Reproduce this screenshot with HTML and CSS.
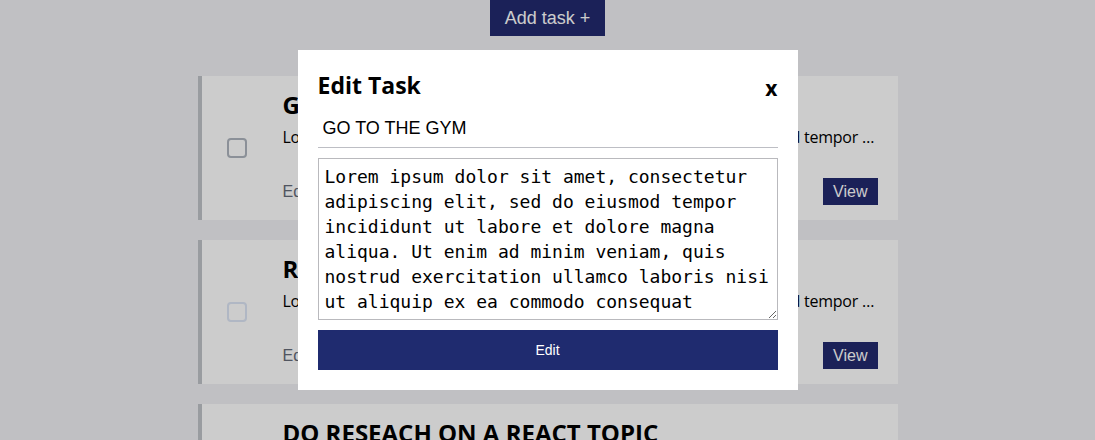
FILE: index.html
```html
<!DOCTYPE html>
<html lang="en">
<head>
    <meta charset="UTF-8">
    <meta name="viewport" content="width=device-width, initial-scale=1.0">
    <title>Tasks</title>
    <link rel="stylesheet" href="styles.css">
</head>
<body>
    <div class="top">
        <button class="add-btn">Add task +</button>
    </div>

    <div class="task-list">
        <div class="task">
            <div class="task-check">
                <input type="checkbox" class="check">
            </div>
            <div class="task-body">
                <h3 class="task-title">GO TO THE GYM</h3>
                <p class="task-desc">Lorem ipsum dolor sit amet, consectetur adipiscing elit, sed do eiusmod tempor incididunt ut labore et dolore magna aliqua.</p>
                <div class="task-footer">
                    <a class="edit-link">Edit</a>
                    <button class="view-btn">View</button>
                </div>
            </div>
        </div>

        <div class="task">
            <div class="task-check">
                <input type="checkbox" class="check light">
            </div>
            <div class="task-body">
                <h3 class="task-title">READ A BOOK</h3>
                <p class="task-desc">Lorem ipsum dolor sit amet, consectetur adipiscing elit, sed do eiusmod tempor incididunt ut labore et dolore magna aliqua.</p>
                <div class="task-footer">
                    <a class="edit-link">Edit</a>
                    <button class="view-btn">View</button>
                </div>
            </div>
        </div>

        <div class="task">
            <div class="task-check">
                <input type="checkbox" class="check">
            </div>
            <div class="task-body">
                <h3 class="task-title">DO RESEACH ON A REACT TOPIC</h3>
                <p class="task-desc">Lorem ipsum dolor sit amet, consectetur adipiscing elit, sed do eiusmod tempor incididunt ut labore et dolore magna aliqua.</p>
                <div class="task-footer">
                    <a class="edit-link">Edit</a>
                    <button class="view-btn">View</button>
                </div>
            </div>
        </div>
    </div>

    <!-- modal -->
    <div class="backdrop"></div>
    <div class="modal">
        <div class="modal-header">
            <h2>Edit Task</h2>
            <span class="close">x</span>
        </div>
        <input class="title-input" type="text" value="GO TO THE GYM">
        <textarea class="desc-input" rows="6">Lorem ipsum dolor sit amet, consectetur adipiscing elit, sed do eiusmod tempor incididunt ut labore et dolore magna aliqua. Ut enim ad minim veniam, quis nostrud exercitation ullamco laboris nisi ut aliquip ex ea commodo consequat</textarea>
        <button class="submit-btn">Edit</button>
    </div>
</body>
</html>
```

FILE: styles.css
```css
* {
    box-sizing: border-box;
}

body {
    margin: 0;
    background: #f0f1f4;
    font-family: 'Liberation Sans', Arial, sans-serif;
    color: #000;
}

.top {
    text-align: center;
}

.add-btn {
    height: 36px;
    padding: 0 15px;
    border: none;
    background: #222a6f;
    color: #fff;
    font-family: 'Liberation Sans', Arial, sans-serif;
    font-size: 18px;
}

.task-list {
    width: 700px;
    margin: 40px auto 0;
    display: flex;
    flex-direction: column;
    gap: 20px;
}

.task {
    display: grid;
    grid-template-columns: 81px 1fr;
    height: 144px;
    background: #fff;
    border-left: 4px solid #c0c4c8;
    padding: 14px 20px 15px 0;
}

.task-check {
    display: flex;
    align-items: center;
    padding-left: 25px;
}

.check {
    appearance: none;
    width: 20px;
    height: 20px;
    margin: 0;
    border: 2px solid #aeb5be;
    border-radius: 4px;
    background: transparent;
}

.check.light {
    border-color: #dce5f5;
}

.task-body {
    min-width: 0;
    display: flex;
    flex-direction: column;
}

.task-title {
    margin: 0;
    font-family: 'Open Sans', sans-serif;
    font-size: 24px;
    font-weight: 700;
    line-height: 30px;
}

.task-desc {
    margin: 6px 0 0;
    font-family: 'Open Sans', sans-serif;
    font-size: 16px;
    line-height: 22px;
    letter-spacing: -0.25px;
    white-space: nowrap;
    overflow: hidden;
    text-overflow: ellipsis;
}

.task-footer {
    margin-top: auto;
    display: flex;
    justify-content: space-between;
    align-items: center;
}

.edit-link {
    font-size: 16px;
    color: #646b78;
}

.view-btn {
    height: 27px;
    padding: 0 10px;
    border: none;
    background: #222a6f;
    color: #fff;
    font-family: 'Liberation Sans', Arial, sans-serif;
    font-size: 16px;
}

.backdrop {
    position: fixed;
    inset: 0;
    background: rgba(0, 0, 0, 0.2);
}

.modal {
    position: fixed;
    top: 50px;
    left: 50%;
    transform: translateX(-50%);
    width: 500px;
    padding: 20px;
    background: #fff;
    display: flex;
    flex-direction: column;
}

.modal-header {
    display: flex;
    justify-content: space-between;
    align-items: center;
    height: 30px;
}

.modal-header h2 {
    margin: 0;
    font-family: 'Open Sans', sans-serif;
    font-size: 23px;
    font-weight: 700;
    line-height: 30px;
}

.close {
    font-family: 'Open Sans', sans-serif;
    font-size: 21px;
    font-weight: 700;
    margin-top: 6px;
}

.title-input {
    margin-top: 10px;
    height: 38px;
    padding: 0 5px;
    border: none;
    border-bottom: 1px solid #bdbec4;
    font-family: 'Liberation Sans', Arial, sans-serif;
    font-size: 18px;
    color: #000;
    outline: none;
}

.desc-input {
    margin-top: 10px;
    height: 162px;
    padding: 5px 6px;
    border: 1px solid #b9b9bd;
    font-family: 'DejaVu Sans Mono', monospace;
    font-size: 18px;
    line-height: 25px;
    color: #000;
    resize: vertical;
}

.submit-btn {
    margin-top: 10px;
    height: 40px;
    border: none;
    background: #1f2b6f;
    color: #fff;
    font-family: 'Liberation Sans', Arial, sans-serif;
    font-size: 14px;
}
```
